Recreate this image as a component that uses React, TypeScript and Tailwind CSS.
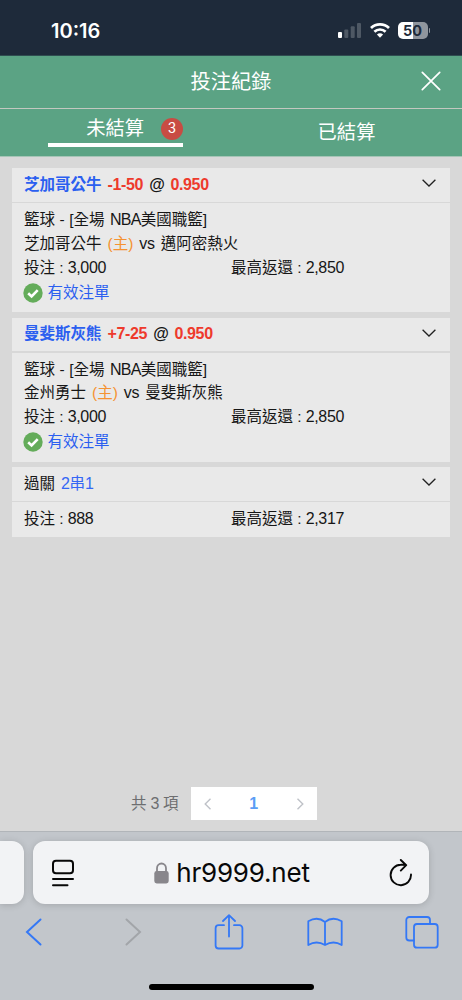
import type { ReactNode } from 'react';

type Bet = {
  team: string;
  odds: string;
  home: string;
  away: string;
};

const bets: Bet[] = [
  { team: '芝加哥公牛', odds: '-1-50', home: '芝加哥公牛', away: '邁阿密熱火' },
  { team: '曼斐斯灰熊', odds: '+7-25', home: '金州勇士', away: '曼斐斯灰熊' },
];

function StatusBar() {
  return (
    <header className="flex h-[56px] items-center justify-between border-b border-[#2f4d50] bg-[#1e2a3a] pt-[6px] pr-[32px] pl-[51px] font-[Inter]">
      <span className="text-[20px] leading-6 font-semibold text-white">10:16</span>
      <div className="-mt-px flex items-center">
        <svg width="24" height="16" viewBox="0 0 24 16">
          <rect x="0" y="10" width="4" height="6" rx="1" fill="#fff" />
          <rect x="6.3" y="7.5" width="4" height="8.5" rx="1" fill="#4e5864" />
          <rect x="12.7" y="4.2" width="4" height="11.8" rx="1" fill="#4e5864" />
          <rect x="19" y="1" width="4" height="15" rx="1" fill="#4e5864" />
        </svg>
        <svg className="ml-[8px]" width="20" height="16" viewBox="0 0 20 16" fill="none" stroke="#fff" strokeWidth="2.7">
          <path d="M1 6a12.8 12.8 0 0 1 18 0" />
          <path d="M4.4 9.8a8 8 0 0 1 11.2 0" />
          <path d="M10 15.8 6.9 12.6a4.5 4.5 0 0 1 6.2 0Z" fill="#fff" stroke="none" />
        </svg>
        <div className="ml-[8px] flex h-[17px] w-[30px] items-center justify-center rounded-[5px] bg-linear-to-r from-white from-50% to-[#8f959d] to-50% text-[14.5px] leading-[17px] font-bold tracking-[-0.1px] text-[#1e2a3a]">
          50
        </div>
        <div className="ml-[1px] h-[5px] w-[1.5px] rounded-r bg-[#8f959d]" />
      </div>
    </header>
  );
}

function Latin({ children }: { children: ReactNode }) {
  return <span className="text-[16px] tracking-[-0.35px]">{children}</span>;
}

function Chevron() {
  return (
    <svg width="14" height="8" viewBox="0 0 14 8" fill="none" stroke="#222" strokeWidth="1.3">
      <path d="M.6.8 7 7 13.4.8" />
    </svg>
  );
}

function CardHeader({ children }: { children: ReactNode }) {
  return (
    <div className="flex h-[33.5px] items-center justify-between bg-[#e9e9e9] pr-[14px] pl-[12px] whitespace-nowrap">
      <div className="flex items-center gap-[6px]">{children}</div>
      <div className="-mt-[3px]">
        <Chevron />
      </div>
    </div>
  );
}

function Amounts({ stake, payout }: { stake: string; payout: string }) {
  return (
    <div className="grid h-[24px] grid-cols-[207px_1fr] items-center">
      <div className="flex gap-[4.2px]">
        <span>投注</span>
        <span>:</span>
        <Latin>{stake}</Latin>
      </div>
      <div className="flex gap-[4.2px]">
        <span>最高返還</span>
        <span>:</span>
        <Latin>{payout}</Latin>
      </div>
    </div>
  );
}

function BetCard({ bet }: { bet: Bet }) {
  return (
    <section className="flex flex-col gap-[1.5px]">
      <CardHeader>
        <b className="text-[#2b5ff0]">{bet.team}</b>
        <b className="text-[#ee3a2c]">
          <Latin>{bet.odds}</Latin>
        </b>
        <b>
          <Latin>@</Latin>
        </b>
        <b className="text-[#ee3a2c]">
          <Latin>0.950</Latin>
        </b>
      </CardHeader>
      <div className="h-[109px] bg-[#e9e9e9] px-[12px] pt-[5px] whitespace-nowrap">
        <div className="flex h-[24px] items-center gap-[4.5px]">
          <span>籃球</span>
          <span>-</span>
          <span className="flex gap-[5.5px]">
            <span>[全場</span>
            <span>
              <span className="text-[16px] tracking-[-0.75px]">NBA</span>美國職籃]
            </span>
          </span>
        </div>
        <div className="flex h-[23.5px] items-center gap-[6px]">
          <span>{bet.home}</span>
          <span className="text-[#f59231]">(主)</span>
          <Latin>vs</Latin>
          <span>{bet.away}</span>
        </div>
        <Amounts stake="3,000" payout="2,850" />
        <div className="flex h-[26px] items-center gap-[4.5px] text-[#2b5ff0]">
          <svg className="-ml-[1px]" width="20" height="20" viewBox="0 0 20 20">
            <circle cx="10" cy="10" r="9.7" fill="#64ac5a" />
            <path d="m5.2 10.2 3.4 3.3 6.1-6.4" fill="none" stroke="#fff" strokeWidth="2.6" />
          </svg>
          <span>有效注單</span>
        </div>
      </div>
    </section>
  );
}

function BrowserBar() {
  return (
    <footer className="flex h-[169px] flex-col items-center overflow-hidden border-t border-[#b1b5b9] bg-[#c2c6cb] pt-[9px]">
      <div className="flex w-full gap-[9.5px]">
        <div className="h-[63px] w-[23.5px] rounded-r-[12px] bg-[#f2f3f5] shadow-[0_1px_7px_rgba(0,0,0,0.16)]" />
        <div className="flex h-[63px] w-[396px] items-center justify-between rounded-[12px] bg-[#f2f3f5] pr-[16px] pl-[18px] shadow-[0_1px_7px_rgba(0,0,0,0.16)]">
          <svg width="24" height="28" viewBox="0 0 24 28" fill="none" stroke="#080808" strokeWidth="2" strokeLinecap="round">
            <rect x="2" y="1.8" width="20" height="12.4" rx="3" />
            <path d="M2 20h20M2 26.2h14.5" />
          </svg>
          <div className="flex items-center gap-[7px]">
            <svg width="15" height="22" viewBox="0 0 15 22">
              <path d="M3 10V6.2a4.5 4.7 0 0 1 9 0V10" fill="none" stroke="#88868b" strokeWidth="1.8" />
              <rect x="0.3" y="9" width="14.4" height="12.5" rx="2.4" fill="#88868b" />
            </svg>
            <span className="font-[Inter] text-[26px] leading-8 tracking-[-0.2px] text-[#080808]">hr9999.net</span>
          </div>
          <svg width="24" height="28" viewBox="0 0 24 28" fill="none" stroke="#080808" strokeWidth="1.9" strokeLinecap="round" strokeLinejoin="round">
            <path d="M22 15.5A10.2 10.2 0 1 1 11.8 5.8Q14.5 5.6 17 6.2M11.8 1l5.4 5.2-5.4 5.4" />
          </svg>
        </div>
      </div>
      <nav className="mt-[8px] flex h-[40px] w-full items-center justify-between pr-[22px] pl-[15px]">
        <span className="flex w-[36px] justify-center">
          <svg width="17" height="28" viewBox="0 0 17 28" fill="none" stroke="#3478f6" strokeWidth="2" strokeLinecap="round">
            <path d="M15.5 1.5 2 14l13.5 12.5" />
          </svg>
        </span>
        <span className="flex w-[36px] justify-center pl-[7px]">
          <svg width="17" height="28" viewBox="0 0 17 28" fill="none" stroke="#a2a5a9" strokeWidth="2" strokeLinecap="round">
            <path d="M1.5 1.5 15 14 1.5 26.5" />
          </svg>
        </span>
        <span className="flex w-[36px] justify-center pl-[2px]">
          <svg width="30" height="36" viewBox="0 0 30 36" fill="none" stroke="#3478f6" strokeWidth="1.8" strokeLinecap="round" strokeLinejoin="round">
            <path d="M10 11.2H4.6a3 3 0 0 0-3 3v17.3a3 3 0 0 0 3 3h20.8a3 3 0 0 0 3-3V14.2a3 3 0 0 0-3-3H20M15 22.5V1.2M9 7l6-5.8L21 7" />
          </svg>
        </span>
        <span className="flex w-[36px] justify-center">
          <svg width="36" height="30" viewBox="0 0 36 30" fill="none" stroke="#3478f6" strokeWidth="1.8" strokeLinejoin="round">
            <path d="M18 5Q10.5-1 1.3 4.2V28q8.2-5 16.7 0 8.5-5 16.7 0V4.2Q25.500-1 18 5ZM18 5V28" />
          </svg>
        </span>
        <span className="flex w-[36px] justify-center">
          <svg width="34" height="34" viewBox="0 0 34 34" fill="none" stroke="#3478f6" strokeWidth="1.8">
            <path d="M9.5 25.5H4.3a3 3 0 0 1-3-3V5a3 3 0 0 1 3-3H22a3 3 0 0 1 3 3v4" />
            <rect x="9" y="9" width="23.7" height="23.7" rx="3" />
          </svg>
        </span>
      </nav>
      <div className="mt-[32px] h-[6px] w-[165px] rounded-full bg-black" />
    </footer>
  );
}

export default function App() {
  return (
    <div className="flex h-[1000px] w-[462px] flex-col overflow-hidden bg-[#d8d8d8] font-['Liberation_Sans','Noto_Sans_CJK_TC',sans-serif] text-[15.5px] leading-[20px] text-[#161616]">
      <StatusBar />
      <div className="grid h-[53px] grid-cols-[1fr_auto_1fr] items-center border-b border-[#c3c8c0] bg-[#5ba384] pr-[21px] pb-px pl-[21px] text-white">
        <h1 className="col-start-2 text-[20.2px] leading-[26px] font-normal">投注紀錄</h1>
        <svg className="-mt-px justify-self-end" width="20" height="20" viewBox="0 0 20 20" stroke="#fff" strokeWidth="1.7" strokeLinecap="round">
          <path d="m1.3 1.3 17.4 17.4M18.7 1.3 1.3 18.7" />
        </svg>
      </div>
      <div className="grid h-[48px] grid-cols-2 border-b border-[#a6c5b7] bg-[#5ba384] text-[19.3px] text-white">
        <div className="flex justify-center">
          <div className="mt-[3px] flex h-[35px] w-[135px] items-center justify-end gap-[17px] border-b-[4px] border-white pt-[2px]">
            <span>未結算</span>
            <span className="flex size-[22px] items-center justify-center rounded-full bg-[#c84c43] pt-[2px] font-[Roboto] text-[14.5px] leading-none">3</span>
          </div>
        </div>
        <div className="flex items-center justify-center pt-[1px]">已結算</div>
      </div>
      <main className="flex flex-1 flex-col gap-[5.5px] px-[12px] pt-[11px]">
        {bets.map((bet) => (
          <BetCard key={bet.team} bet={bet} />
        ))}
        <section className="flex flex-col gap-[1.5px]">
          <CardHeader>
            <span>過關</span>
            <span className="text-[#3567f5]">
              <Latin>2</Latin>串<Latin>1</Latin>
            </span>
          </CardHeader>
          <div className="h-[35px] bg-[#e9e9e9] px-[12px] pt-[5px]">
            <Amounts stake="888" payout="2,317" />
          </div>
        </section>
        <div className="mt-auto mb-[11px] flex h-[33px] items-center gap-[12px] pl-[119px] text-[#6d6e70]">
          <span className="flex gap-[4px]">
            <span>共</span>
            <Latin>3</Latin>
            <span>項</span>
          </span>
          <div className="flex h-[33px] w-[126px] items-center justify-between bg-white px-[13px]">
            <svg width="8" height="12" viewBox="0 0 8 12" fill="none" stroke="#bfc2c8" strokeWidth="1.4">
              <path d="M6.5.7 1.2 6l5.3 5.3" />
            </svg>
            <b className="text-[16px] text-[#5b9df5]">1</b>
            <svg width="8" height="12" viewBox="0 0 8 12" fill="none" stroke="#bfc2c8" strokeWidth="1.4">
              <path d="M1.5.7 6.8 6l-5.3 5.3" />
            </svg>
          </div>
        </div>
      </main>
      <BrowserBar />
    </div>
  );
}
